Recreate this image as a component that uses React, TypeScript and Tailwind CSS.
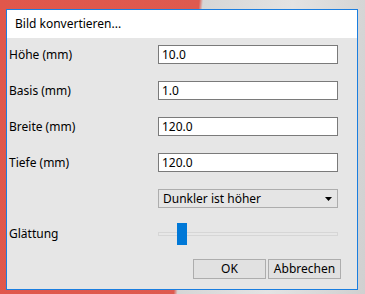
import React from "react";

const font = { fontFamily: '"Noto Sans", "Segoe UI", Arial, sans-serif' };

function Field({ label, value }: { label: string; value: string }) {
  return (
    <div className="flex h-[19px] items-center">
      <span className="w-[151px] pl-[2px] text-[12px] text-black">{label}</span>
      <div className="flex h-[19px] w-[180px] items-center border border-[#7a7a7a] bg-white pl-[3px] text-[12px] text-black">
        {value}
      </div>
    </div>
  );
}

export default function App() {
  return (
    <div
      className="relative h-[294px] w-[365px] overflow-hidden bg-[linear-gradient(95deg,#e0574b_0%,#de5a4f_51%,#d6d6d6_52%,#e3e3e3_75%,#d0d0d0_100%)]"
      style={font}
    >
      <div className="ml-[6px] mt-[9px] flex h-[281px] w-[352px] flex-col border border-[#1a7ee0] bg-[#e6e6e6]">
        <div className="flex h-[28px] items-center bg-white pl-[8px] text-[12px] text-black">
          Bild konvertieren...
        </div>
        <div className="flex flex-col gap-[17px] pt-[7px]">
          <Field label="Höhe (mm)" value="10.0" />
          <Field label="Basis (mm)" value="1.0" />
          <Field label="Breite (mm)" value="120.0" />
          <Field label="Tiefe (mm)" value="120.0" />
          <div className="flex h-[19px] items-center">
            <span className="w-[151px]" />
            <div className="flex h-[19px] w-[180px] items-center justify-between border border-[#adadad] bg-[#e5e5e5] pl-[4px] pr-[5px] text-[12px] text-black">
              <span>Dunkler ist höher</span>
              <svg width="7" height="4" viewBox="0 0 7 4">
                <path d="M0 0 H7 L3.5 4 Z" fill="#000" />
              </svg>
            </div>
          </div>
        </div>
        <div className="mt-[15px] flex h-[22px] items-center">
          <span className="w-[151px] pl-[2px] text-[12px] text-black">Glättung</span>
          <div className="relative h-[22px] w-[180px]">
            <div className="absolute left-0 right-0 top-[9px] h-[4px] border border-[#d6d6d6] bg-[#e7e7e7]" />
            <div className="absolute left-[19px] top-0 h-[22px] w-[10px] bg-[#0078d7]" />
          </div>
        </div>
        <div className="mt-[14px] flex justify-end gap-[2px] pr-[16px]">
          <button className="flex h-[20px] w-[73px] items-center justify-center border border-[#adadad] bg-[#e1e1e1] text-[12px] text-black">
            OK
          </button>
          <button className="flex h-[20px] w-[73px] items-center justify-center border border-[#adadad] bg-[#e1e1e1] text-[12px] text-black">
            Abbrechen
          </button>
        </div>
      </div>
    </div>
  );
}
